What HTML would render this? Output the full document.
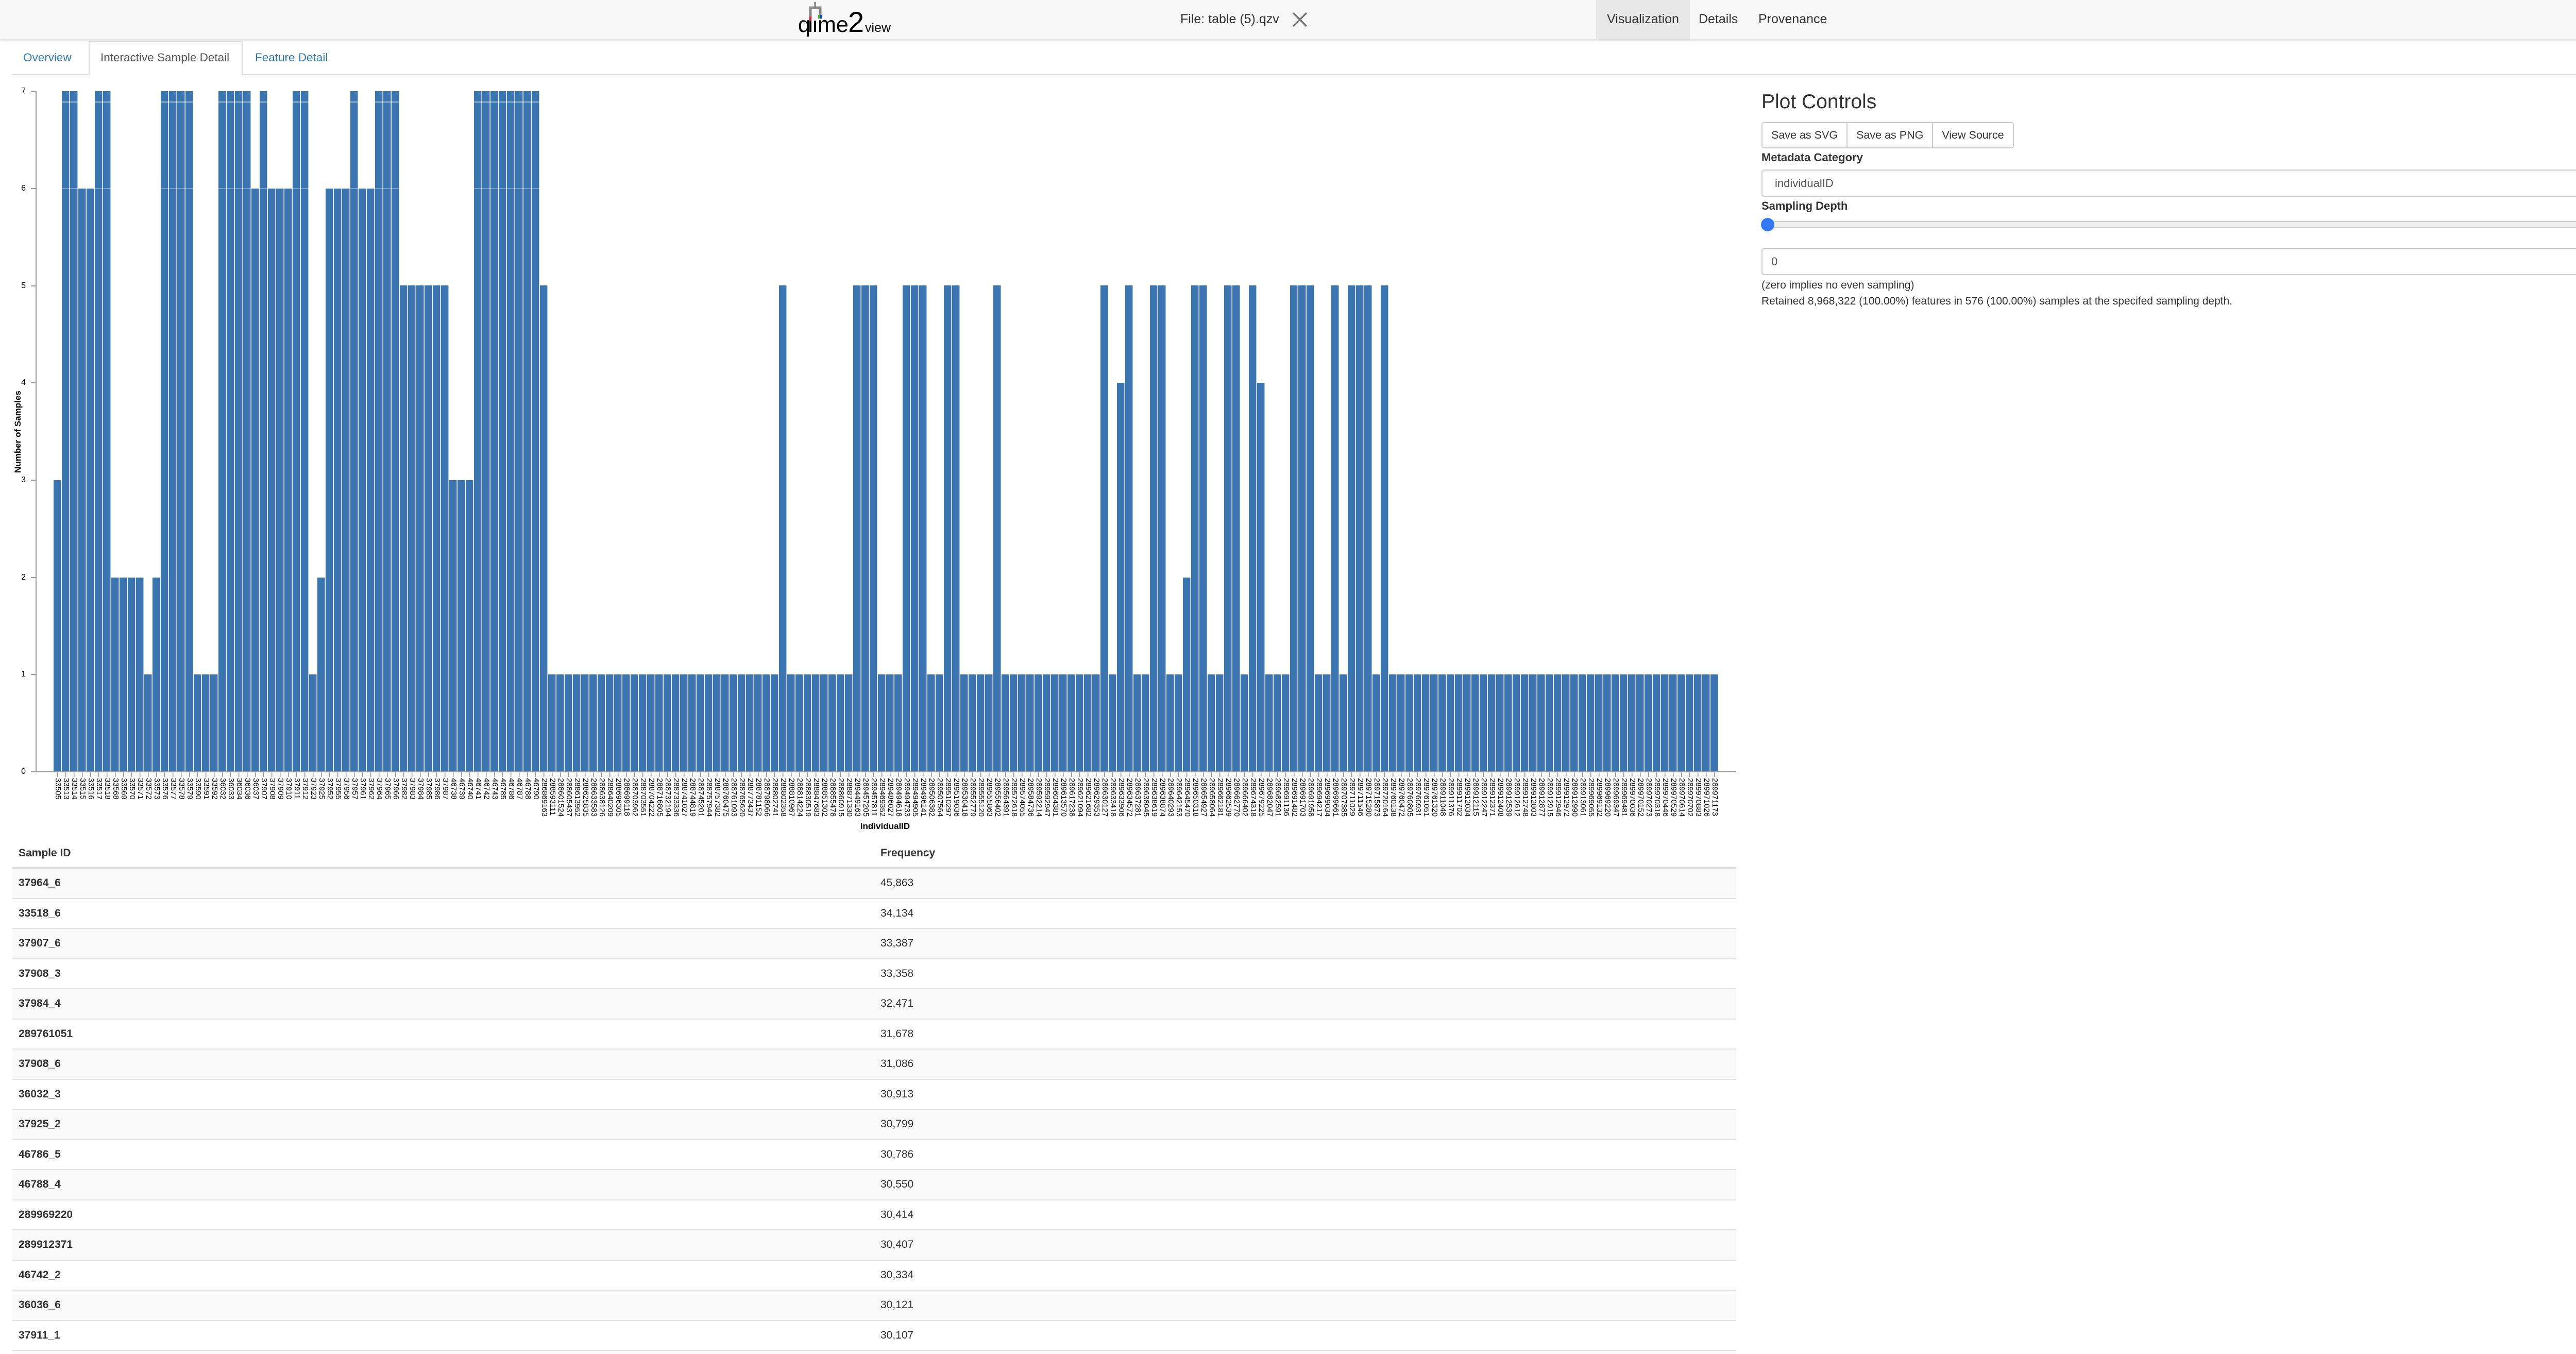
<!DOCTYPE html>
<html><head><meta charset="utf-8">
<style>
*{box-sizing:border-box;margin:0;padding:0}
html,body{width:5086px;height:2628px;overflow:hidden;background:#fff;font-family:"Liberation Sans",Arial,sans-serif;color:#333;position:relative}
.hdr{position:absolute;left:0;top:0;width:5086px;height:76px;background:#f8f8f8;border-bottom:1px solid #d8d8d8;box-shadow:0 2px 5px rgba(0,0,0,.18)}
.file{position:absolute;left:2291px;top:22px;font-size:25px;color:#333;line-height:30px}
.nav{position:absolute;top:0;height:75px;line-height:75px;font-size:25px;color:#333}
.tabs{position:absolute;left:23px;top:144px;width:5043px;border-top:2px solid #ddd}
.tab{position:absolute;top:97px;font-size:22.5px;line-height:30px}
.act{position:absolute;left:172px;top:80px;width:299px;height:66px;border:2px solid #ddd;border-bottom:none;background:#fff}
.bars{position:absolute;left:104px;top:100px;height:1398px;display:flex;align-items:flex-end}
.bars i{display:block;background:repeating-linear-gradient(90deg,#3b75af 0 14.6px,#fff 14.6px 16px)}
.bars i.v7{background:linear-gradient(rgba(0,0,0,0) 0 20px,rgba(255,255,255,.55) 20px 22px,rgba(0,0,0,0) 22px 188px,rgba(255,255,255,.3) 188px 190px,rgba(0,0,0,0) 190px),repeating-linear-gradient(90deg,#3b75af 0 14.6px,#fff 14.6px 16px)}
.v1{height:189px}.v2{height:377px}.v3{height:566px}.v4{height:755px}.v5{height:944px}.v6{height:1132px}.v7{height:1321px}
.yax{position:absolute;left:69px;top:177px;width:2px;height:1322px;background:#999}
.xax{position:absolute;left:69px;top:1497px;width:3300px;height:2px;background:#999}
.xt{position:absolute;left:104px;top:1499px;width:3232px;height:9px;background:repeating-linear-gradient(90deg,rgba(0,0,0,0) 0 7px,#999 7px 8.5px,rgba(0,0,0,0) 8.5px 16px)}
.yt{position:absolute;left:60px;width:10px;height:2px;background:#999}
.yl{position:absolute;right:5036px;width:30px;text-align:right;font-size:16px;line-height:18px;color:#000}
.lbl{position:absolute;left:104px;top:1510px;display:flex;align-items:flex-start}
.lbl span{display:block;width:16px;writing-mode:vertical-rl;font-size:15px;line-height:16px;color:#000;white-space:nowrap}
.ytitle{position:absolute;left:35px;top:838px;transform:translate(-50%,-50%) rotate(-90deg);font-weight:bold;font-size:17px;white-space:nowrap;color:#000}
.xtitle{position:absolute;left:1718px;top:1594px;transform:translateX(-50%);font-weight:bold;font-size:17px;color:#000}
.tbl{position:absolute;left:24px;top:1628px;width:3346px;font-size:21px}
.th{height:58px;border-bottom:3px solid #ddd;position:relative;font-weight:bold}
.tr{height:58.5px;border-bottom:2px solid #e3e3e3;position:relative}
.c1,.c2{position:absolute;top:50%;transform:translateY(-50%);line-height:24px}
.c1{left:12px}.c2{left:1685px}
.tr .c1{font-weight:bold}
.pc{position:absolute;left:3419px;font-size:22px}
.btns{position:absolute;left:3419px;top:237px;height:51px;display:flex;border:2px solid #ccc;border-radius:5px;overflow:hidden}
.btns div{height:47px;line-height:47px;font-size:21.5px;padding:0 17px;border-right:2px solid #ccc;color:#333;background:#fff}
.btns div:last-child{border-right:none}
.box{position:absolute;left:3419px;width:1648px;border:2px solid #ccc;border-radius:6px;background:#fff}
</style></head><body>
<div class="hdr">
<svg style="position:absolute;left:1541px;top:0" width="230" height="76" viewBox="0 0 230 76">
<line x1="41" y1="4" x2="41" y2="15" stroke="#777" stroke-width="3"/>
<path d="M32 36 V15 H51 V30" fill="none" stroke="#888" stroke-width="5"/>
<rect x="30" y="32" width="4" height="8" fill="#e23"/>
<rect x="47" y="29" width="4" height="7" fill="#3c3"/>
<rect x="51" y="29" width="4" height="7" fill="#23d"/>
<text x="8" y="62" font-family="Liberation Sans, sans-serif" font-size="43" fill="#000">q</text>
<rect x="30" y="40" width="4" height="22" fill="#000"/>
<rect x="39" y="40" width="4" height="22" fill="#000"/>
<text x="46" y="62" font-family="Liberation Sans, sans-serif" font-size="43" fill="#000">me</text>
<text x="105" y="62" font-family="Liberation Sans, sans-serif" font-size="56" fill="#000">2</text>
<text x="138" y="62" font-family="Liberation Sans, sans-serif" font-size="25" fill="#000">view</text>
</svg>
<div class="file">File: table (5).qzv</div>
<svg style="position:absolute;left:2507px;top:24px" width="32" height="28" viewBox="0 0 32 28"><path d="M3 1 L29 27 M29 1 L3 27" stroke="#777" stroke-width="3.5"/></svg>
<div class="nav" style="left:3098px;width:182px;background:#e7e7e7;text-align:center">Visualization</div>
<div class="nav" style="left:3297px">Details</div>
<div class="nav" style="left:3413px">Provenance</div>
</div>

<div class="tabs"></div>
<div class="act"></div>
<div class="tab" style="left:45px;color:#337ab7">Overview</div>
<div class="tab" style="left:195px;color:#555">Interactive Sample Detail</div>
<div class="tab" style="left:495px;color:#337ab7">Feature Detail</div>

<div class="yax"></div>
<div class="yt" style="top:176px"></div><div class="yt" style="top:365px"></div><div class="yt" style="top:554px"></div><div class="yt" style="top:742px"></div><div class="yt" style="top:931px"></div><div class="yt" style="top:1120px"></div><div class="yt" style="top:1308px"></div><div class="yt" style="top:1497px"></div>
<div class="yl" style="top:168px">7</div><div class="yl" style="top:357px">6</div><div class="yl" style="top:546px">5</div><div class="yl" style="top:734px">4</div><div class="yl" style="top:923px">3</div><div class="yl" style="top:1112px">2</div><div class="yl" style="top:1300px">1</div><div class="yl" style="top:1489px">0</div>
<div class="ytitle">Number of Samples</div>

<div class="bars">
<i class="v3" style="width:16px"></i><i class="v7" style="width:32px"></i><i class="v6" style="width:32px"></i><i class="v7" style="width:32px"></i><i class="v2" style="width:64px"></i><i class="v1" style="width:16px"></i><i class="v2" style="width:16px"></i><i class="v7" style="width:64px"></i><i class="v1" style="width:48px"></i><i class="v7" style="width:64px"></i><i class="v6" style="width:16px"></i><i class="v7" style="width:16px"></i><i class="v6" style="width:48px"></i><i class="v7" style="width:32px"></i><i class="v1" style="width:16px"></i><i class="v2" style="width:16px"></i><i class="v6" style="width:48px"></i><i class="v7" style="width:16px"></i><i class="v6" style="width:32px"></i><i class="v7" style="width:48px"></i><i class="v5" style="width:96px"></i><i class="v3" style="width:48px"></i><i class="v7" style="width:128px"></i><i class="v5" style="width:16px"></i><i class="v1" style="width:448px"></i><i class="v5" style="width:16px"></i><i class="v1" style="width:128px"></i><i class="v5" style="width:48px"></i><i class="v1" style="width:48px"></i><i class="v5" style="width:48px"></i><i class="v1" style="width:32px"></i><i class="v5" style="width:32px"></i><i class="v1" style="width:64px"></i><i class="v5" style="width:16px"></i><i class="v1" style="width:192px"></i><i class="v5" style="width:16px"></i><i class="v1" style="width:16px"></i><i class="v4" style="width:16px"></i><i class="v5" style="width:16px"></i><i class="v1" style="width:32px"></i><i class="v5" style="width:32px"></i><i class="v1" style="width:32px"></i><i class="v2" style="width:16px"></i><i class="v5" style="width:32px"></i><i class="v1" style="width:32px"></i><i class="v5" style="width:32px"></i><i class="v1" style="width:16px"></i><i class="v5" style="width:16px"></i><i class="v4" style="width:16px"></i><i class="v1" style="width:48px"></i><i class="v5" style="width:48px"></i><i class="v1" style="width:32px"></i><i class="v5" style="width:16px"></i><i class="v1" style="width:16px"></i><i class="v5" style="width:48px"></i><i class="v1" style="width:16px"></i><i class="v5" style="width:16px"></i><i class="v1" style="width:640px"></i>
</div>
<div class="xax"></div>
<div class="xt"></div>
<div class="lbl">
<span>33505</span><span>33513</span><span>33514</span><span>33515</span><span>33516</span><span>33517</span><span>33518</span><span>33568</span><span>33569</span><span>33570</span><span>33571</span><span>33572</span><span>33573</span><span>33576</span><span>33577</span><span>33578</span><span>33579</span><span>33590</span><span>33591</span><span>33592</span><span>36032</span><span>36033</span><span>36034</span><span>36036</span><span>36037</span><span>37907</span><span>37908</span><span>37909</span><span>37910</span><span>37911</span><span>37912</span><span>37923</span><span>37925</span><span>37952</span><span>37955</span><span>37956</span><span>37957</span><span>37961</span><span>37962</span><span>37964</span><span>37965</span><span>37966</span><span>37982</span><span>37983</span><span>37984</span><span>37985</span><span>37986</span><span>37987</span><span>46738</span><span>46739</span><span>46740</span><span>46741</span><span>46742</span><span>46743</span><span>46785</span><span>46786</span><span>46787</span><span>46788</span><span>46790</span>
<span>286869163</span><span>288593111</span><span>288601524</span><span>288605437</span><span>288613952</span><span>288625835</span><span>288633583</span><span>288638126</span><span>288640209</span>
<span>288696305</span><span>288699118</span><span>288703962</span><span>288703551</span><span>288704222</span><span>288716805</span><span>288732194</span><span>288733336</span><span>288741027</span><span>288744819</span><span>288745201</span><span>288757944</span><span>288757382</span><span>288760475</span><span>288761093</span><span>288765620</span><span>288773437</span><span>288781152</span><span>288798066</span><span>288802741</span><span>288802358</span><span>288810967</span><span>288814224</span><span>288830519</span><span>288847683</span><span>288851302</span><span>288855478</span><span>288860915</span><span>288871330</span>
<span>289449163</span><span>289457205</span><span>289457811</span><span>289469352</span><span>289486027</span><span>289494618</span><span>289494733</span><span>289494905</span><span>289496141</span><span>289506382</span><span>289507564</span><span>289510297</span><span>289519036</span><span>289530418</span><span>289552779</span><span>289555120</span><span>289555863</span><span>289556402</span><span>289564391</span><span>289572618</span><span>289574055</span><span>289584736</span><span>289592214</span><span>289592947</span><span>289604381</span><span>289613570</span><span>289617238</span><span>289621094</span><span>289621682</span><span>289629353</span><span>289630127</span><span>289633418</span><span>289633906</span><span>289634572</span><span>289637281</span><span>289638045</span><span>289638619</span><span>289638874</span><span>289640293</span>
<span>289642153</span><span>289645470</span><span>289650318</span><span>289654927</span><span>289658064</span><span>289662181</span><span>289662539</span><span>289662770</span><span>289666402</span><span>289674318</span><span>289679225</span><span>289682047</span><span>289682591</span><span>289691136</span><span>289691482</span><span>289691703</span><span>289691958</span><span>289694217</span><span>289699034</span><span>289699661</span><span>289707385</span><span>289711029</span><span>289711546</span><span>289715280</span><span>289715873</span><span>289720164</span><span>289760138</span><span>289760472</span><span>289760805</span><span>289760931</span><span>289761051</span><span>289761320</span><span>289911048</span><span>289911376</span><span>289911702</span><span>289912034</span><span>289912115</span><span>289912247</span><span>289912371</span><span>289912408</span><span>289912539</span><span>289912612</span><span>289912748</span><span>289912803</span><span>289912877</span><span>289912915</span><span>289912946</span><span>289912972</span><span>289912990</span><span>289913061</span><span>289969055</span><span>289969132</span><span>289969220</span><span>289969347</span><span>289969481</span><span>289970036</span><span>289970152</span><span>289970273</span><span>289970318</span><span>289970446</span><span>289970529</span><span>289970614</span><span>289970702</span><span>289970883</span><span>289971026</span><span>289971173</span>
</div>
<div class="xtitle">individualID</div>

<div class="tbl">
<div class="th"><div class="c1">Sample ID</div><div class="c2">Frequency</div></div>
<div>
<div class="tr" style="background:#f9f9f9"><div class="c1">37964_6</div><div class="c2">45,863</div></div>
<div class="tr" style="background:#fff"><div class="c1">33518_6</div><div class="c2">34,134</div></div>
<div class="tr" style="background:#f9f9f9"><div class="c1">37907_6</div><div class="c2">33,387</div></div>
<div class="tr" style="background:#fff"><div class="c1">37908_3</div><div class="c2">33,358</div></div>
<div class="tr" style="background:#f9f9f9"><div class="c1">37984_4</div><div class="c2">32,471</div></div>
<div class="tr" style="background:#fff"><div class="c1">289761051</div><div class="c2">31,678</div></div>
<div class="tr" style="background:#f9f9f9"><div class="c1">37908_6</div><div class="c2">31,086</div></div>
<div class="tr" style="background:#fff"><div class="c1">36032_3</div><div class="c2">30,913</div></div>
<div class="tr" style="background:#f9f9f9"><div class="c1">37925_2</div><div class="c2">30,799</div></div>
<div class="tr" style="background:#fff"><div class="c1">46786_5</div><div class="c2">30,786</div></div>
<div class="tr" style="background:#f9f9f9"><div class="c1">46788_4</div><div class="c2">30,550</div></div>
<div class="tr" style="background:#fff"><div class="c1">289969220</div><div class="c2">30,414</div></div>
<div class="tr" style="background:#f9f9f9"><div class="c1">289912371</div><div class="c2">30,407</div></div>
<div class="tr" style="background:#fff"><div class="c1">46742_2</div><div class="c2">30,334</div></div>
<div class="tr" style="background:#f9f9f9"><div class="c1">36036_6</div><div class="c2">30,121</div></div>
<div class="tr" style="background:#fff"><div class="c1">37911_1</div><div class="c2">30,107</div></div>
<div class="tr" style="background:#f9f9f9"><div class="c1">37912_2</div><div class="c2">30,021</div></div>
</div>
</div>

<div class="pc" style="top:174px;font-size:39px;line-height:48px;color:#333">Plot Controls</div>
<div class="btns"><div>Save as SVG</div><div>Save as PNG</div><div>View Source</div></div>
<div class="pc" style="top:292px;font-weight:bold;line-height:28px">Metadata Category</div>
<div class="box" style="top:329px;height:53px"><div style="position:absolute;left:24px;top:12px;font-size:22px;color:#555;line-height:26px">individualID</div>
<svg style="position:absolute;right:8px;top:18px" width="16" height="14" viewBox="0 0 16 14"><path d="M2 3 L8 11 L14 3" fill="none" stroke="#555" stroke-width="2"/></svg></div>
<div class="pc" style="top:386px;font-weight:bold;line-height:28px">Sampling Depth</div>
<div style="position:absolute;left:3419px;top:429px;width:1648px;height:14px;background:#efefef;border:2px solid #ccc;border-radius:7px"></div>
<div style="position:absolute;left:3418px;top:423px;width:26px;height:26px;border-radius:50%;background:#3478f6"></div>
<div class="box" style="top:481px;height:53px"><div style="position:absolute;left:17px;top:12px;font-size:22px;color:#555;line-height:26px">0</div></div>
<div class="pc" style="top:541px;font-size:21px;line-height:25px">(zero implies no even sampling)</div>
<div class="pc" style="top:572px;font-size:21px;line-height:25px">Retained 8,968,322 (100.00%) features in 576 (100.00%) samples at the specifed sampling depth.</div>
</body></html>
